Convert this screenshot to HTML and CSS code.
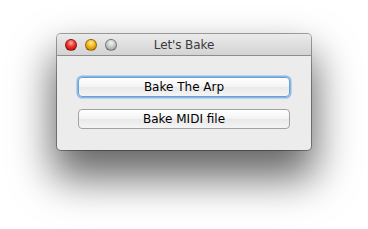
FILE: index.html
```html
<!DOCTYPE html>
<html lang="en">
<head>
  <meta charset="UTF-8" />
  <title>Let's Bake</title>
  <link rel="stylesheet" href="styles.css">
</head>
<body>
  <div class="window">
    <div class="titlebar">
      <div class="lights">
        <span class="light red"></span>
        <span class="light yellow"></span>
        <span class="light gray"></span>
      </div>
      <div class="title">Let's Bake</div>
    </div>
    <div class="content">
      <button class="btn focus">Bake The Arp</button>
      <button class="btn">Bake MIDI file</button>
    </div>
  </div>
</body>
</html>
```

FILE: styles.css
```css
html, body { margin: 0; padding: 0; background: #fff; }
body { font-family: "DejaVu Sans", "Liberation Sans", sans-serif; height: 229px; overflow: hidden; padding-top: 34px; box-sizing: border-box; }

.window {
  width: 254px; height: 116px; margin-left: 57px;
  border-radius: 4px; overflow: hidden;
  background: #ececec;
  box-shadow: 0 0 0 1px rgba(0,0,0,0.35), 0 24px 42px 4px rgba(0,0,0,0.6);
  display: flex; flex-direction: column;
}
.titlebar {
  height: 21px; position: relative;
  background: linear-gradient(#ebebeb, #d3d3d3);
  border-bottom: 1px solid #8e8e8e;
  display: flex; align-items: center;
}
.lights { display: flex; gap: 8px; padding-left: 8px; }
.light {
  width: 12px; height: 12px; border-radius: 50%;
  box-sizing: border-box; border: 1px solid rgba(0,0,0,0.35);
}
.red { background: radial-gradient(circle at 50% 30%, #ffb0a8 0, #f0322a 45%, #a80c06 100%); }
.yellow { background: radial-gradient(circle at 50% 30%, #fff0a0 0, #f5b41a 45%, #b57404 100%); }
.gray { background: radial-gradient(circle at 50% 30%, #f4f4f4 0, #c6c6c6 50%, #8e8e8e 100%); }
.title {
  position: absolute; left: 0; right: 0; text-align: center;
  font-size: 12px; color: #3a3a3a; letter-spacing: -0.1px;
}
.content {
  display: flex; flex-direction: column; gap: 12px;
  padding: 21px 0 0 21px;
}
.btn {
  width: 212px; height: 20px; padding: 0; margin: 0;
  font-family: "DejaVu Sans", "Liberation Sans", sans-serif; font-size: 12px; color: #000;
  background: linear-gradient(#ffffff, #f3f3f3 50%, #e9e9e9 51%, #f4f4f4);
  border: 1px solid #a2a2a2; border-radius: 4px;
}
.focus {
  border-color: #6a9fd6;
  box-shadow: 0 0 0 1.5px #8ab8ea;
}
```
